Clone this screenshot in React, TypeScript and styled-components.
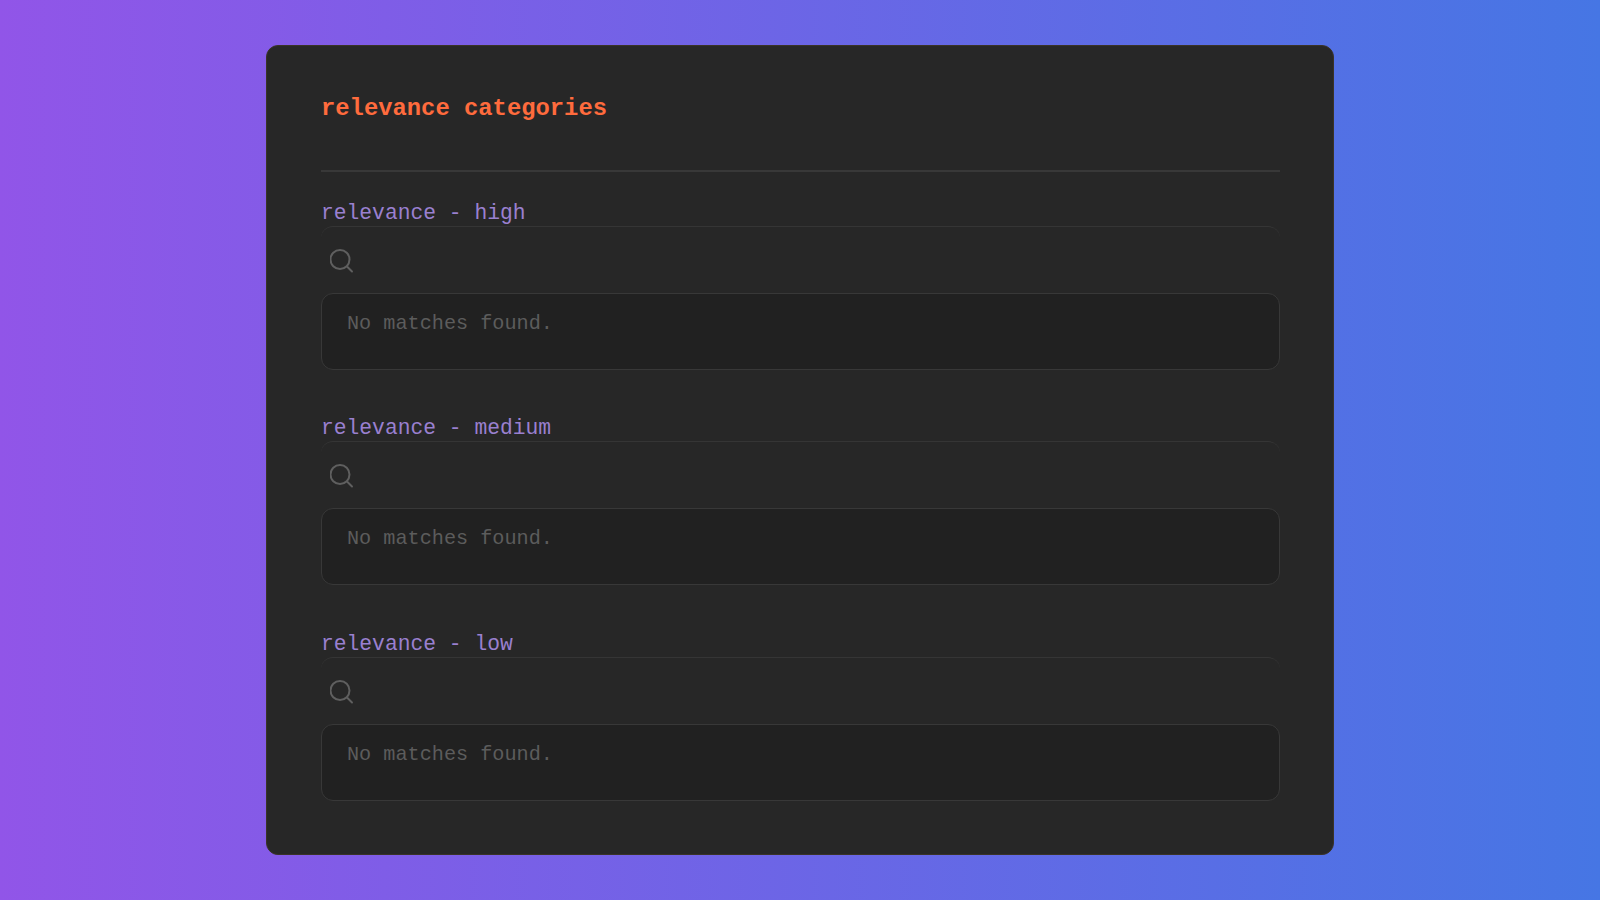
import styled, { createGlobalStyle } from "styled-components";

const GlobalStyle = createGlobalStyle`
  html, body {
    margin: 0;
    height: 100%;
  }
  body {
    font-family: "Liberation Mono", "Courier New", monospace;
  }
`;

const Page = styled.div`
  width: 100%;
  height: 900px;
  display: flex;
  align-items: center;
  justify-content: center;
  background: linear-gradient(90deg, #9155e8 0%, #4676e4 100%);
`;

const Card = styled.main`
  box-sizing: border-box;
  width: 1068px;
  height: 810px;
  padding: 47px 53px 50px 54px;
  display: flex;
  flex-direction: column;
  background: #272727;
  border: 1px solid #3a3328;
  border-radius: 12px;
`;

const Title = styled.h1`
  margin: 0;
  height: 30px;
  font-size: 23.84px;
  line-height: 31px;
  font-weight: 700;
  color: #ff6b3d;
`;

const Divider = styled.hr`
  width: 100%;
  height: 2px;
  margin: 47px 0 29px;
  border: 0;
  background: #383838;
`;

const Sections = styled.div`
  display: flex;
  flex-direction: column;
  gap: 46.3px;
`;

const Section = styled.section`
  display: flex;
  flex-direction: column;
`;

const Heading = styled.h2`
  margin: 0;
  height: 25px;
  font-size: 21.3px;
  line-height: 24px;
  font-weight: 400;
  color: #9a80d0;
`;

const SearchRow = styled.div`
  box-sizing: border-box;
  height: 67px;
  padding: 22px 0 0 9px;
  border-top: 1px solid #353535;
  border-radius: 12px 12px 0 0;
  display: flex;
  align-items: flex-start;
`;

const SearchIcon = styled.svg`
  width: 24px;
  height: 24px;
  fill: none;
  stroke: #5f5f5f;
  stroke-width: 2;
  stroke-linecap: round;
`;

const Results = styled.div`
  box-sizing: border-box;
  height: 77px;
  padding: 18px 25px;
  background: #212121;
  border: 1px solid #383838;
  border-radius: 12px;
  font-size: 20.2px;
  line-height: 24px;
  color: #5c5c5c;
`;

const categories = ["high", "medium", "low"];

export default function App() {
  return (
    <>
      <GlobalStyle />
      <Page>
        <Card>
          <Title>relevance categories</Title>
          <Divider />
          <Sections>
            {categories.map((level) => (
              <Section key={level}>
                <Heading>relevance - {level}</Heading>
                <SearchRow>
                  <SearchIcon viewBox="0 0 24 24">
                    <circle cx="10" cy="10.5" r="9.5" />
                    <line x1="17.5" y1="18" x2="22" y2="22.5" />
                  </SearchIcon>
                </SearchRow>
                <Results>No matches found.</Results>
              </Section>
            ))}
          </Sections>
        </Card>
      </Page>
    </>
  );
}
